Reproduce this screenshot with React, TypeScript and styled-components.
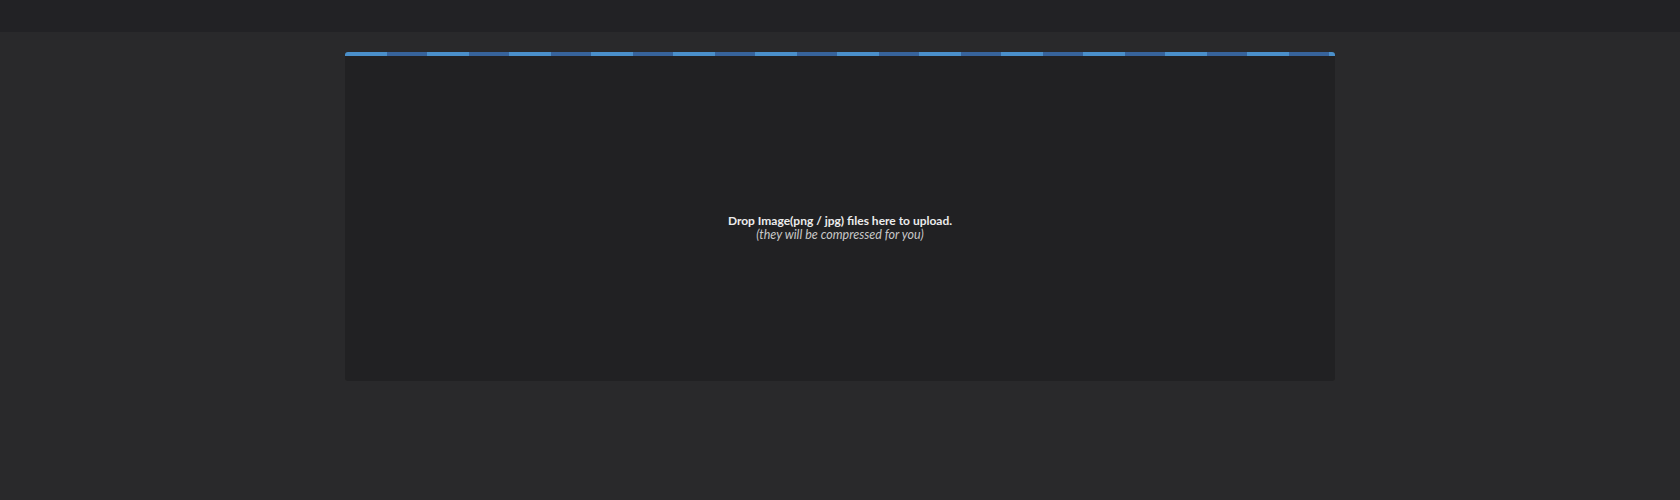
import React from "react";
import styled, { createGlobalStyle } from "styled-components";

const Global = createGlobalStyle`
  html, body { margin: 0; padding: 0; }
  body {
    background: #29292b;
    font-family: Lato, "Open Sans", sans-serif;
    height: 500px;
    overflow: hidden;
  }
`;

const TopBar = styled.header`
  height: 32px;
  background: #222225;
`;

const Main = styled.main`
  display: flex;
  justify-content: center;
  padding-top: 20px;
`;

const DropZone = styled.section`
  width: 990px;
  height: 329px;
  background: #212123;
  border-radius: 3px;
  overflow: hidden;
  display: flex;
  flex-direction: column;
`;

const Stripe = styled.div`
  height: 4px;
  flex: none;
  background: repeating-linear-gradient(
    to right,
    #4a8fca 0px,
    #4a8fca 42px,
    #37639b 42px,
    #37639b 82px
  );
`;

const Body = styled.div`
  flex: 1;
  display: flex;
  flex-direction: column;
  align-items: center;
  justify-content: center;
  padding-top: 18px;
  line-height: 14px;
  font-size: 12px;
`;

const Title = styled.div`
  color: #ececec;
  font-weight: 700;
`;

const Note = styled.div`
  color: #c8c8c8;
  font-style: italic;
  font-size: 12.5px;
`;

export default function App() {
  return (
    <>
      <Global />
      <TopBar />
      <Main>
        <DropZone>
          <Stripe />
          <Body>
            <Title>Drop Image(png / jpg) files here to upload.</Title>
            <Note>(they will be compressed for you)</Note>
          </Body>
        </DropZone>
      </Main>
    </>
  );
}
